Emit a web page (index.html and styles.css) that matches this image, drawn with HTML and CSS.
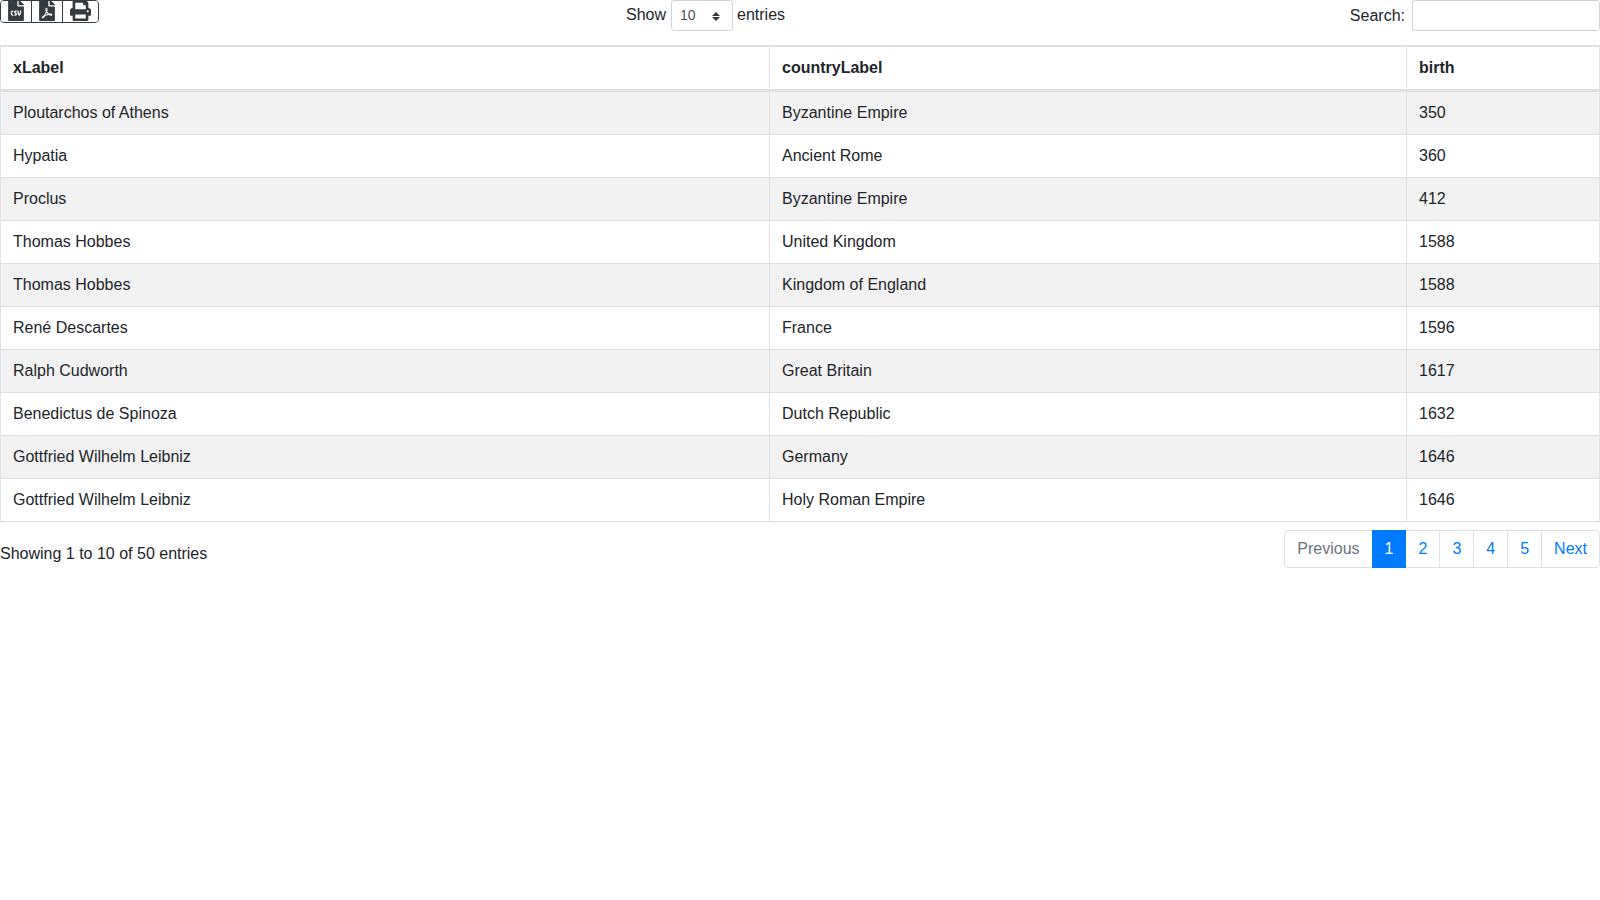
FILE: index.html
```html
<!DOCTYPE html>
<html lang="en">
<head>
<meta charset="utf-8">
<title>Table</title>
<link rel="stylesheet" href="styles.css">
</head>
<body>
<div class="top">
  <div class="btn-group">
    <button class="btn btn-csv"><svg viewBox="0 0 384 512" class="ico"><path fill="#343a40" d="M224 136V0H24C10.7 0 0 10.7 0 24v464c0 13.3 10.7 24 24 24h336c13.3 0 24-10.7 24-24V160H248c-13.2 0-24-10.8-24-24zm-96 144c0 4.42-3.58 8-8 8h-8c-8.84 0-16 7.16-16 16v32c0 8.84 7.16 16 16 16h8c4.42 0 8 3.58 8 8v16c0 4.42-3.58 8-8 8h-8c-26.51 0-48-21.49-48-48v-32c0-26.51 21.49-48 48-48h8c4.42 0 8 3.58 8 8v16zm44.27 104H160c-4.42 0-8-3.58-8-8v-16c0-4.42 3.58-8 8-8h12.27c5.95 0 10.41-3.5 10.41-6.62 0-1.3-.75-2.66-2.12-3.84l-21.89-18.77c-8.47-7.22-13.33-17.48-13.33-28.14 0-21.3 19.02-38.62 42.41-38.62H200c4.42 0 8 3.58 8 8v16c0 4.42-3.58 8-8 8h-12.27c-5.95 0-10.41 3.5-10.41 6.62 0 1.3.75 2.66 2.12 3.84l21.89 18.77c8.47 7.22 13.33 17.48 13.33 28.14.01 21.29-19 38.62-42.39 38.62zM256 264v20.8c0 20.27 5.7 40.17 16 56.88 10.3-16.7 16-36.61 16-56.88V264c0-4.42 3.58-8 8-8h16c4.42 0 8 3.58 8 8v20.8c0 35.48-12.88 68.89-36.28 94.09-3.02 3.25-7.27 5.11-11.72 5.11s-8.7-1.86-11.72-5.11c-23.4-25.2-36.28-58.61-36.28-94.09V264c0-4.42 3.58-8 8-8h16c4.42 0 8 3.58 8 8zm121-159L279.1 7c-4.5-4.5-10.6-7-17-7H256v128h128v-6.1c0-6.3-2.5-12.4-7-16.9z"/></svg></button>
    <button class="btn btn-pdf"><svg viewBox="0 0 384 512" class="ico"><path fill="#343a40" d="M181.900 256.100c-5-16-4.900-46.900-2-46.900 8.400 0 7.600 36.900 2 46.900zm-1.700 47.200c-7.700 20.200-17.300 43.300-28.400 62.700 18.300-7 39-17.200 62.900-21.900-12.700-9.600-24.900-23.400-34.500-40.800zM86.100 428.100c0 .8 13.200-5.400 34.900-40.200-6.700 6.300-29.100 24.500-34.900 40.200zM248 160h136v328c0 13.300-10.700 24-24 24H24c-13.300 0-24-10.700-24-24V24C0 10.700 10.700 0 24 0h200v136c0 13.200 10.800 24 24 24zm-8 171.800c-20-12.200-33.300-29-42.700-53.800 4.500-18.500 11.600-46.600 6.200-64.200-4.700-29.400-42.400-26.500-47.800-6.800-5 18.300-.4 44.100 8.100 77-11.600 27.600-28.700 64.600-40.800 85.800-.1 0-.1.100-.2.100-27.100 13.900-73.600 44.500-54.500 68 5.600 6.900 16 10 21.500 10 17.900 0 35.700-18 61.100-61.800 25.800-8.500 54.100-19.100 79-23.200 21.700 11.800 47.100 19.500 64 19.500 29.200 0 31.200-32 19.700-43.400-13.900-13.600-54.300-9.700-73.600-7.200zM377 105L279 7c-4.500-4.500-10.600-7-17-7h-6v128h128v-6.100c0-6.300-2.500-12.400-7-16.900z"/></svg></button>
    <button class="btn btn-print"><svg viewBox="0 0 512 512" class="ico-print"><path fill="#343a40" d="M448 192V77.250c0-8.490-3.370-16.620-9.370-22.630L393.370 9.370c-6-6-14.140-9.370-22.630-9.370H96C78.330 0 64 14.330 64 32v160c-35.350 0-64 28.650-64 64v112c0 8.840 7.160 16 16 16h48v96c0 17.670 14.330 32 32 32h320c17.670 0 32-14.330 32-32v-96h48c8.840 0 16-7.160 16-16V256c0-35.350-28.650-64-64-64zm-64 256H128v-96h256v96zm0-224H128V64h192v48c0 8.840 7.160 16 16 16h48v96zm48 72c-13.250 0-24-10.750-24-24 0-13.260 10.750-24 24-24s24 10.740 24 24c0 13.250-10.750 24-24 24z"/></svg></button>
  </div>
  <div class="length"><span class="len-label">Show</span><span class="select">10</span><span class="len-label">entries</span></div>
  <div class="search"><span>Search:</span><span class="input"></span></div>
</div>
<table class="data">
  <colgroup><col class="c1"><col class="c2"><col class="c3"></colgroup>
  <thead><tr><th>xLabel</th><th>countryLabel</th><th>birth</th></tr></thead>
  <tbody>
    <tr><td>Ploutarchos of Athens</td><td>Byzantine Empire</td><td>350</td></tr>
    <tr><td>Hypatia</td><td>Ancient Rome</td><td>360</td></tr>
    <tr><td>Proclus</td><td>Byzantine Empire</td><td>412</td></tr>
    <tr><td>Thomas Hobbes</td><td>United Kingdom</td><td>1588</td></tr>
    <tr><td>Thomas Hobbes</td><td>Kingdom of England</td><td>1588</td></tr>
    <tr><td>René Descartes</td><td>France</td><td>1596</td></tr>
    <tr><td>Ralph Cudworth</td><td>Great Britain</td><td>1617</td></tr>
    <tr><td>Benedictus de Spinoza</td><td>Dutch Republic</td><td>1632</td></tr>
    <tr><td>Gottfried Wilhelm Leibniz</td><td>Germany</td><td>1646</td></tr>
    <tr><td>Gottfried Wilhelm Leibniz</td><td>Holy Roman Empire</td><td>1646</td></tr>
  </tbody>
</table>
<div class="bottom">
  <div class="info">Showing 1 to 10 of 50 entries</div>
  <ul class="pagination">
    <li class="page-item"><a class="page disabled">Previous</a></li>
    <li class="page-item"><a class="page active">1</a></li>
    <li class="page-item"><a class="page">2</a></li>
    <li class="page-item"><a class="page">3</a></li>
    <li class="page-item"><a class="page">4</a></li>
    <li class="page-item"><a class="page">5</a></li>
    <li class="page-item"><a class="page">Next</a></li>
  </ul>
</div>
</body>
</html>
```
FILE: styles.css
```css
* { box-sizing: border-box; }
html, body { margin: 0; padding: 0; background: #fff; }
body { font-family: "Liberation Sans", Arial, sans-serif; font-size: 16px; line-height: 24px; color: #212529; }
.top { display: grid; grid-template-columns: 533px 345px 1fr; height: 45px; align-items: start; }
.btn-group { display: flex; justify-self: start; height: 23px; border: 1px solid #343a40; border-radius: 4px; overflow: hidden; }
.btn { display: flex; align-items: center; justify-content: center; background: #fff; border: 0; padding: 0; height: 100%; border-right: 1px solid #343a40; }
.btn:last-child { border-right: 0; }
.btn-csv, .btn-pdf { width: 31px; }
.btn-print { width: 35px; }
.ico { width: 16px; height: 21px; display: block; margin-top: -2px; }
.ico-print { width: 21px; height: 21px; display: block; margin-top: -2px; }
.length { display: flex; align-items: flex-start; justify-content: center; gap: 5px; height: 31px; }
.len-label { padding-top: 3px; }
.select { display: flex; align-items: center; width: 62px; height: 31px; margin-right: -1px; padding: 0 0 2px 8px; font-size: 14px; color: #495057; border: 1px solid #ced4da; border-radius: 3.2px; background: #fff; position: relative; }
.select::before, .select::after { content: ""; position: absolute; right: 12px; border-left: 4px solid transparent; border-right: 4px solid transparent; }
.select::before { top: 10.5px; border-bottom: 4px solid #343a40; }
.select::after { top: 15.5px; border-top: 4px solid #343a40; }
.search { display: flex; align-items: center; justify-content: flex-end; gap: 7px; height: 31px; }
.input { width: 188px; height: 31px; border: 1px solid #ced4da; border-radius: 3.2px; background: #fff; }
.data { width: 1600px; table-layout: fixed; border-collapse: separate; border-spacing: 0; }
.c1 { width: 770px; }
.c2 { width: 637px; }
.c3 { width: 193px; }
th, td { padding: 9px 12px; border-right: 1px solid #dee2e6; border-bottom: 1px solid #dee2e6; text-align: left; }
th:first-child, td:first-child { border-left: 1px solid #dee2e6; }
th { border-top: 2px solid #dee2e6; border-bottom-width: 3px; font-weight: 700; }
tbody tr:nth-child(odd) { background: #f2f2f2; }
.bottom { display: flex; justify-content: space-between; margin-top: 8px; }
.info { padding-top: 12px; }
.pagination { display: flex; list-style: none; margin: 0; padding: 0; }
.page { display: block; height: 38px; padding: 6px 12px; border: 1px solid #dee2e6; margin-left: -1px; color: #007bff; background: #fff; }
.page-item:first-child .page { border-radius: 4px 0 0 4px; margin-left: 0; }
.page-item:last-child .page { border-radius: 0 4px 4px 0; }
.disabled { color: #6c757d; }
.active { background: #007bff; border-color: #007bff; color: #fff; position: relative; }
```
